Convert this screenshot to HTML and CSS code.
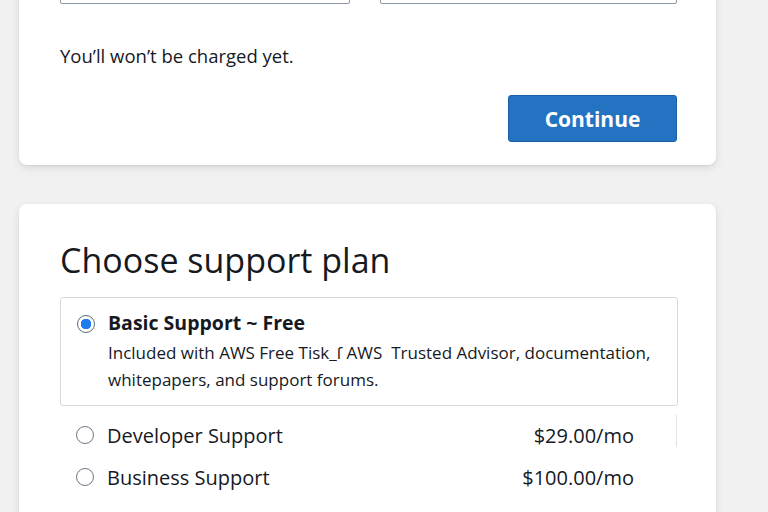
FILE: index.html
```html
<!DOCTYPE html>
<html>
<head>
<meta charset="utf-8">
<link rel="stylesheet" href="styles.css">
</head>
<body>
<div class="page">
  <section class="card card-payment">
    <div class="inputs">
      <div class="input"></div>
      <div class="input"></div>
    </div>
    <p class="note">You’ll won’t be charged yet.</p>
    <div class="actions">
      <button class="btn-primary">Continue</button>
    </div>
  </section>

  <section class="card card-support">
    <h2 class="title">Choose support plan</h2>
    <div class="plan plan-selected">
      <span class="radio radio-on"></span>
      <div class="plan-body">
        <div class="plan-name">Basic Support ~ Free</div>
        <div class="plan-desc">Included with AWS Free Tisk_ſ AWS&nbsp; Trusted Advisor, documentation, whitepapers, and support forums.</div>
      </div>
    </div>
    <div class="plan-list">
      <div class="plan-row plan-row-first">
        <span class="radio"></span>
        <span class="row-name">Developer Support</span>
        <span class="row-price">$29.00/mo</span>
      </div>
      <div class="plan-row">
        <span class="radio"></span>
        <span class="row-name">Business Support</span>
        <span class="row-price">$100.00/mo</span>
      </div>
    </div>
  </section>
</div>
</body>
</html>
```

FILE: styles.css
```css
* { box-sizing: border-box; }
html, body { margin: 0; padding: 0; }
body {
  background: #f1f1f1;
  font-family: "Open Sans", "Noto Sans", Arial, sans-serif;
  color: #16191f;
  height: 512px;
  overflow: hidden;
}
.page {
  width: 697px;
  margin-left: 19px;
  margin-top: -60px;
  display: flex;
  flex-direction: column;
  gap: 39px;
}
.card {
  background: #fff;
  border-radius: 8px;
  box-shadow: 0 3px 8px rgba(0,0,0,0.10), 0 1px 2px rgba(0,0,0,0.06);
}
.card-payment {
  padding: 24px 39px 23px 41px;
}
.inputs {
  display: grid;
  grid-template-columns: 290px 1fr;
  gap: 30px;
}
.input {
  height: 40px;
  border: 1px solid #8f9aa6;
  border-radius: 2px;
}
.note {
  margin: 40px 0 0;
  font-size: 18.5px;
  line-height: 24px;
}
.actions {
  display: flex;
  justify-content: flex-end;
  margin-top: 27px;
}
.btn-primary {
  width: 169px;
  height: 47px;
  border: 1px solid #1a5fa8;
  border-radius: 3px;
  background: #2373c2;
  color: #fff;
  font-family: inherit;
  font-weight: 700;
  font-size: 21px;
}
.card-support {
  padding: 34px 0 40px 41px;
}
.title {
  margin: 0;
  font-weight: 400;
  font-size: 34px;
  line-height: 44px;
}
.plan {
  display: flex;
  align-items: flex-start;
  gap: 13px;
}
.plan-selected {
  width: 618px;
  margin-top: 15px;
  border: 1px solid #d5dbdb;
  border-radius: 3px;
  padding: 12px 10px 12px 16px;
}
.radio {
  flex: none;
  width: 18px;
  height: 18px;
  border-radius: 50%;
  border: 1.5px solid #6b7580;
  background: #fff;
}
.plan-selected .radio { margin-top: 5px; }
.radio-on {
  border: 1.5px solid #5a6a80;
  background: radial-gradient(circle, #1e7bf0 0 5px, #fff 5.5px);
}
.plan-name {
  font-weight: 700;
  font-size: 19.5px;
  line-height: 26px;
}
.plan-desc {
  margin-top: 3px;
  font-size: 17px;
  line-height: 27px;
}
.plan-list {
  width: 618px;
  padding-top: 8px;
  display: flex;
  flex-direction: column;
}
.plan-row {
  display: flex;
  align-items: center;
  gap: 13px;
  height: 42px;
  padding: 0 44px 0 16px;
  font-size: 20px;
}
.plan-row-first {
  background: linear-gradient(#e2e2e2, #e2e2e2) right 1px top 1px / 1px 32px no-repeat;
}
.row-name { flex: 1; }
.row-price { text-align: right; }
```
